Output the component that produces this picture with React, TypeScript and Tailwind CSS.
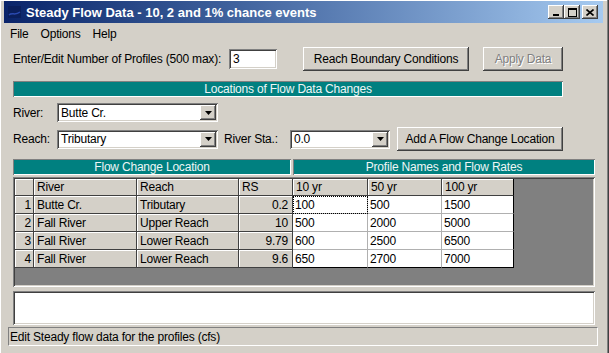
import React from "react";

const raised =
  "bg-[#d4d0c8] shadow-[inset_-1px_-1px_#404040,inset_1px_1px_#ffffff,inset_-2px_-2px_#808080,inset_2px_2px_#d4d0c8]";
const sunken =
  "shadow-[inset_1px_1px_#808080,inset_-1px_-1px_#ffffff,inset_2px_2px_#404040,inset_-2px_-2px_#d4d0c8]";

const rows = [
  { n: 1, river: "Butte Cr.", reach: "Tributary", rs: "0.2", flows: ["100", "500", "1500"] },
  { n: 2, river: "Fall River", reach: "Upper Reach", rs: "10", flows: ["500", "2000", "5000"] },
  { n: 3, river: "Fall River", reach: "Lower Reach", rs: "9.79", flows: ["600", "2500", "6500"] },
  { n: 4, river: "Fall River", reach: "Lower Reach", rs: "9.6", flows: ["650", "2700", "7000"] },
];

const profiles = ["10 yr", "50 yr", "100 yr"];

const ComboBox: React.FC<{ value: string; width: string }> = ({ value, width }) => (
  <div className={`${width} h-[19px] bg-white ${sunken} flex items-center pl-[4px] pr-[2px]`}>
    <span className="flex-1 leading-none">{value}</span>
    <div className={`w-[16px] h-[15px] ${raised} flex items-center justify-center`}>
      <svg width="7" height="4" viewBox="0 0 7 4">
        <path d="M0 0h7L3.5 4z" fill="#000" />
      </svg>
    </div>
  </div>
);

const WinButton: React.FC<{ children: React.ReactNode; className?: string }> = ({ children, className }) => (
  <div className={`w-[16px] h-[14px] ${raised} flex items-center justify-center ${className ?? ""}`}>{children}</div>
);

const TealBar: React.FC<{ label: string; width: string }> = ({ label, width }) => (
  <div
    className={`${width} h-[16px] bg-[#008080] text-[#eef6f6] shadow-[inset_1px_1px_#808080,inset_-1px_-1px_#ffffff] flex items-center justify-center leading-none`}
  >
    {label}
  </div>
);

export default function App() {
  // header and read-only cells share the same grey look
  const hdr = "bg-[#d4d0c8] border-r border-b border-[#404040] shadow-[inset_1px_1px_#ffffff] px-[3px] flex items-center";
  const grey = hdr;

  return (
    <div className="w-[609px] h-[353px] overflow-hidden bg-[#d4d0c8] font-['Liberation_Sans',Arial,sans-serif] text-[12px] tracking-[-0.2px] whitespace-nowrap text-black flex flex-col pl-[4px] pr-[6px] pt-[1px] shadow-[inset_-1px_0_#404040,inset_-2px_0_#808080,inset_1px_1px_#ffffff]">
      {/* title bar */}
      <div className="h-[22px] bg-gradient-to-r from-[#0a246a] to-[#a6caf0] flex items-center pl-[3px] pr-[5px]">
        <svg width="16" height="16" viewBox="0 0 16 16" className="mr-[3px]">
          <rect x="1" y="2" width="13" height="12" fill="#0a1f5c" />
          <path d="M2 11c3-3 6 1 11-3" stroke="#2a4ab0" strokeWidth="1.5" fill="none" />
        </svg>
        <span className="text-white font-bold text-[13px] tracking-normal leading-none">
          Steady Flow Data - 10, 2 and 1% chance events
        </span>
        <div className="ml-auto flex items-center">
          <WinButton>
            <div className="w-[6px] h-[2px] bg-black mt-[6px] mr-[1px]" />
          </WinButton>
          <WinButton>
            <div className="w-[9px] h-[9px] border border-black border-t-2" />
          </WinButton>
          <WinButton className="ml-[2px]">
            <svg width="8" height="7" viewBox="0 0 8 7">
              <path d="M0.5 0.5l7 6M7.5 0.5l-7 6" stroke="#000" strokeWidth="1.6" />
            </svg>
          </WinButton>
        </div>
      </div>

      {/* menu */}
      <div className="h-[20px] flex items-center gap-[12px] pl-[6px] pt-[2px]">
        <span>File</span>
        <span>Options</span>
        <span>Help</span>
      </div>

      <div className="flex flex-col pl-[9px]">
        {/* profiles row */}
        <div className="flex items-center mt-[4px] h-[24px]">
          <span className="w-[216px]">Enter/Edit Number of Profiles (500 max):</span>
          <div className={`w-[48px] h-[20px] bg-white ${sunken} flex items-center pl-[4px]`}>3</div>
          <div className={`ml-[26px] w-[166px] h-[24px] ${raised} flex items-center justify-center`}>
            Reach Boundary Conditions
          </div>
          <div
            className={`ml-[14px] w-[80px] h-[24px] ${raised} flex items-center justify-center text-[#808080] [text-shadow:1px_1px_#ffffff]`}
          >
            Apply Data
          </div>
        </div>

        <div className="mt-[10px]">
          <TealBar label="Locations of Flow Data Changes" width="w-[550px]" />
        </div>

        {/* river row */}
        <div className="flex items-center mt-[6px] h-[19px]">
          <span className="w-[44px]">River:</span>
          <ComboBox value="Butte Cr." width="w-[161px]" />
        </div>

        {/* reach row */}
        <div className="flex items-center mt-[5px] h-[24px]">
          <span className="w-[44px]">Reach:</span>
          <ComboBox value="Tributary" width="w-[161px]" />
          <span className="ml-[6px] w-[66px]">River Sta.:</span>
          <ComboBox value="0.0" width="w-[100px]" />
          <div className={`ml-[7px] w-[166px] h-[24px] ${raised} flex items-center justify-center`}>
            Add A Flow Change Location
          </div>
        </div>

        {/* grid headers */}
        <div className="flex mt-[8px] gap-[2px]">
          <TealBar label="Flow Change Location" width="w-[278px]" />
          <TealBar label="Profile Names and Flow Rates" width="w-[302px]" />
        </div>

        {/* grid */}
        <div className={`mt-[2px] w-[582px] h-[110px] bg-[#808080] ${sunken} p-[2px]`}>
          <div className="grid grid-cols-[19px_103px_102px_54px_75px_74px_72px] grid-rows-[17px_18px_18px_18px_18px] w-[499px]">
            <div className={hdr} />
            <div className={hdr}>River</div>
            <div className={hdr}>Reach</div>
            <div className={hdr}>RS</div>
            {profiles.map((p, i) => (
              <div key={p} className={`${hdr} ${i === 2 ? "border-r-black" : ""}`}>
                {p}
              </div>
            ))}
            {rows.map((r, ri) => (
              <React.Fragment key={r.n}>
                <div className={`${grey} justify-end !px-[2px]`}>{r.n}</div>
                <div className={grey}>{r.river}</div>
                <div className={grey}>{r.reach}</div>
                <div className={`${grey} justify-end !pr-[4px]`}>{r.rs}</div>
                {r.flows.map((f, fi) => (
                  <div
                    key={fi}
                    className={`bg-white border-r border-b border-[#b0b0b0] px-[2px] flex items-center ${
                      fi === 2 ? "border-r-black" : ""
                    } ${ri === 3 ? "border-b-black" : ""} ${
                      ri === 0 && fi === 0 ? "outline-1 outline-dotted outline-black outline-offset-[-1px]" : ""
                    }`}
                  >
                    {f}
                  </div>
                ))}
              </React.Fragment>
            ))}
          </div>
        </div>

        {/* notes box */}
        <div className={`mt-[4px] w-[582px] h-[34px] bg-white ${sunken}`} />

        {/* status bar */}
        <div className="mt-[2px] ml-[-5px] w-[590px] h-[19px] border border-t-[#808080] border-l-[#808080] border-b-white border-r-white flex items-center pl-[1px]">
          Edit Steady flow data for the profiles (cfs)
        </div>
      </div>
    </div>
  );
}
